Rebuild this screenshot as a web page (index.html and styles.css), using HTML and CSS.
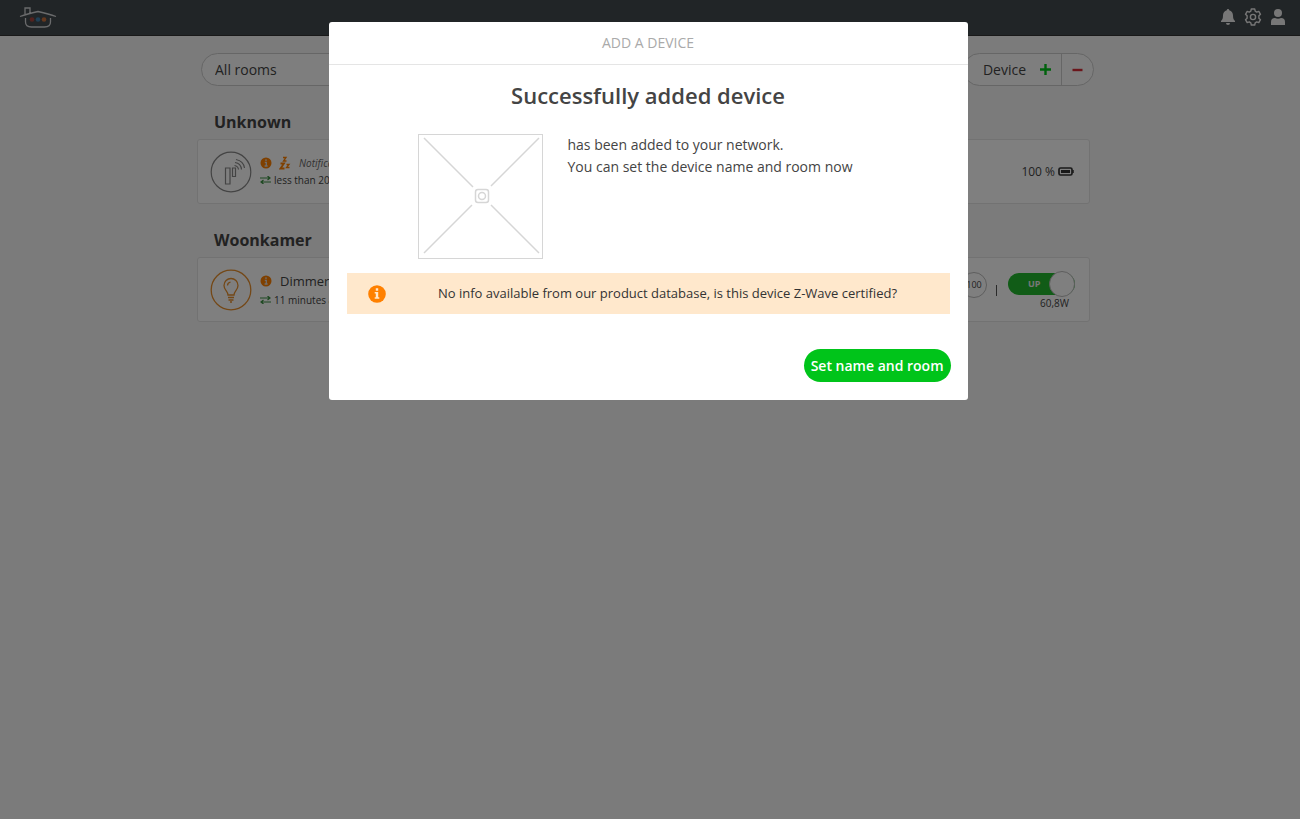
FILE: index.html
```html
<!DOCTYPE html>
<html lang="en">
<head>
<meta charset="utf-8">
<meta name="viewport" content="width=device-width, initial-scale=1">
<title>Add a device</title>
<link rel="stylesheet" href="styles.css">
</head>
<body>
<header class="topbar">
  <a class="logo" href="#" aria-label="Home">
    <svg width="38" height="22" viewBox="0 0 38 22" fill="none" stroke="#d4d6d8" stroke-width="1.300">
      <path d="M1 10.500Q8 8 19 5.500 30 8 37 10.500M6 8.500V2h5v5M6.500 12v4q0 5 6 5h13q6 0 6-5v-4"/>
      <circle cx="13" cy="13.500" r="2.300" fill="#a8453c" stroke="none"/>
      <circle cx="19" cy="13.500" r="2.300" fill="#3e80ac" stroke="none"/>
      <circle cx="25" cy="13.500" r="2.300" fill="#c9703c" stroke="none"/>
    </svg>
  </a>
  <nav class="tools">
    <button class="tool" aria-label="Notifications">
      <svg width="16" height="18" viewBox="0 0 16 18" fill="currentColor"><path d="M8 1a1.200 1.200 0 0 0-1.200 1.300C4.300 2.900 3 5 3 7.500c0 3-.7 4.300-2 5.500v1h14v-1c-1.300-1.200-2-2.500-2-5.500 0-2.500-1.300-4.600-3.800-5.200A1.200 1.200 0 0 0 8 1ZM6 15a2 2 0 0 0 4 0Z"/></svg>
    </button>
    <button class="tool" aria-label="Settings">
      <svg width="18" height="18" viewBox="0 0 18 18" fill="none" stroke="currentColor" stroke-width="1.400" stroke-linejoin="round"><path d="M7.300 1h3.400l.5 2.200 1.500.9 2.100-.7 1.700 2.900-1.600 1.500v2.400l1.600 1.500-1.700 2.900-2.100-.7-1.500.9-.5 2.200H7.300l-.5-2.200-1.500-.9-2.100.7-1.700-2.900 1.600-1.500V7.800L1.500 6.300l1.700-2.900 2.100.7 1.500-.9Z"/><circle cx="9" cy="9" r="2.600"/></svg>
    </button>
    <button class="tool" aria-label="Account">
      <svg width="16" height="18" viewBox="0 0 16 18" fill="currentColor"><circle cx="8" cy="5" r="4"/><path d="M1 17v-3q0-4 4-4 3 1.300 6 0 4 0 4 4v3Z"/></svg>
    </button>
  </nav>
</header>

<main class="page">
  <div class="filters">
    <select class="room-select" aria-label="Room"><option>All rooms</option></select>
    <div class="device-actions">
      <button class="action add">Device
        <svg width="11" height="11" viewBox="0 0 11 11" stroke="#00c41a" stroke-width="2.400"><path d="M5.500 0v11M0 5.500h11"/></svg>
      </button>
      <button class="action remove" aria-label="Remove device">
        <svg width="11" height="11" viewBox="0 0 11 11" stroke="#d62c36" stroke-width="2.400"><path d="M.5 6h10"/></svg>
      </button>
    </div>
  </div>

  <h2 class="room">Unknown</h2>
  <section class="card">
    <svg class="device-icon" width="42" height="42" viewBox="0 0 42 42" fill="none" stroke="#888" stroke-width="1.200">
      <circle cx="21" cy="21" r="19.800"/><path d="M15.500 17h4.500v16h-4.500ZM22.500 17h3v8.500h-3ZM24.500 14.500q3.500.5 4 4M25 11.500q6 .8 6.500 7M26 8.500q7.500 1.500 8.500 8.500"/>
    </svg>
    <div class="details">
      <div class="line">
        <svg width="12" height="12" viewBox="0 0 12 12"><circle cx="6" cy="6" r="5.500" fill="#ff8000"/><path d="M6 2.300v1.700M4.800 5.300H6.300v3.500M4.600 9h3" stroke="#ddd" stroke-width="1.300" fill="none"/></svg>
        <svg class="sleep" width="12" height="14" viewBox="0 0 12 14" fill="none" stroke="#ff8000" stroke-width="1.300"><path d="M1.500 7.500h3.500L1.500 12.500h4" stroke-width="1.800"/><path d="M4 1.500h3l-2.500 3.500h3M7.500 8.500h2.500l-2.500 3h3"/></svg>
        <em class="kind">Notification sensor</em>
      </div>
      <div class="line seen">
        <svg width="11" height="8" viewBox="0 0 11 8" fill="none" stroke="#3c9144" stroke-width="1.200"><path d="M0 2h10M7.500 0 10 2 7.500 4M11 6H1M3.500 4 1 6l2.500 2"/></svg>
        <span>less than 20 seconds ago</span>
      </div>
    </div>
    <div class="battery">100 %
      <svg width="16" height="10" viewBox="0 0 16 10" fill="none" stroke="#333"><rect x="1" y="1" width="13" height="7" rx="1.500" stroke-width="1.700"/><path d="M3 4.500h9" stroke-width="3"/><path d="M15 3v3" stroke-width="1.500"/></svg>
    </div>
  </section>

  <h2 class="room">Woonkamer</h2>
  <section class="card">
    <svg class="device-icon" width="42" height="42" viewBox="0 0 42 42" fill="none" stroke="#e8902e" stroke-width="1.300">
      <circle cx="21" cy="21" r="19.800"/><path d="M18 26c0-4-4-5-4-9.500a7 7 0 0 1 14 0c0 4.500-4 5.500-4 9.500ZM18 28.500h6M18.500 31h5M20 33h2M17.500 16.500q.3-3 3-3.300"/>
    </svg>
    <div class="details">
      <div class="line titled">
        <svg width="12" height="12" viewBox="0 0 12 12"><circle cx="6" cy="6" r="5.500" fill="#ff8000"/><path d="M6 2.300v1.700M4.800 5.300H6.300v3.500M4.600 9h3" stroke="#ddd" stroke-width="1.300" fill="none"/></svg>
        <span class="name">Dimmer</span>
      </div>
      <div class="line seen">
        <svg width="11" height="8" viewBox="0 0 11 8" fill="none" stroke="#3c9144" stroke-width="1.200"><path d="M0 2h10M7.500 0 10 2 7.500 4M11 6H1M3.500 4 1 6l2.500 2"/></svg>
        <span>11 minutes ago</span>
      </div>
    </div>
    <div class="controls">
      <span class="level">100</span>
      <span class="divider"></span>
      <div class="power">
        <label class="switch"><input type="checkbox" checked><span>UP</span></label>
        <span class="watts">60,8W</span>
      </div>
    </div>
  </section>
</main>

<div class="backdrop">
  <div class="dialog" role="dialog" aria-modal="true" aria-labelledby="dialog-title">
    <div class="dialog-head" id="dialog-title">ADD A DEVICE</div>
    <div class="dialog-body">
      <h1 class="result">Successfully added device</h1>
      <div class="summary">
        <svg class="photo" width="125" height="125" viewBox="0 0 125 125" fill="none" stroke="#d6d6d6" role="img" aria-label="No product picture">
          <rect x=".5" y=".5" width="124" height="124"/>
          <path d="M6 4 55 53M121 4 73 52M6 119 54 71M121 119 73 71" stroke-width="1.500"/>
          <rect x="57.500" y="55.500" width="13" height="13" rx="2.500" stroke-width="1.500"/><circle cx="64" cy="62" r="3.500" stroke-width="1.500"/>
        </svg>
        <p class="message">has been added to your network.<br>You can set the device name and room now</p>
      </div>
      <div class="notice">
        <svg width="18" height="18" viewBox="0 0 18 18"><circle cx="9" cy="9" r="8.800" fill="#ff8000"/><path d="M7.800 3.300h2.400v2.400H7.800ZM6.700 7h3.500v5.200h1.100v1.600H6.700v-1.600h1.100V8.600H6.700Z" fill="#ffe8cc"/></svg>
        <p>No info available from our product database, is this device Z-Wave certified?</p>
      </div>
      <div class="buttons"><button class="primary">Set name and room</button></div>
    </div>
  </div>
</div>
</body>
</html>
```
FILE: styles.css
```css
* { box-sizing: border-box; }
body {
  margin: 0;
  min-height: 100vh;
  background: #f6f6f6;
  color: #444;
  font-family: "Open Sans", "Noto Sans", sans-serif;
  font-size: 14px;
}
h1, h2, p { margin: 0; }
button, select { font: inherit; color: inherit; cursor: pointer; }
svg { flex: none; display: block; }

.topbar {
  display: flex;
  align-items: center;
  justify-content: space-between;
  height: 36px;
  padding: 0 14px 2px 19px;
  background: #434a4e;
  border-bottom: 1px solid #333;
}
.tools { display: flex; gap: 8px; }
.tool { display: flex; padding: 0; border: 0; background: none; color: #eee; }

.page { max-width: 906px; margin: 0 auto; padding: 17px 13px 0 0; }
.filters { display: flex; justify-content: space-between; margin: 0 -4px 0 4px; }
.room-select {
  appearance: none;
  width: 300px;
  height: 33px;
  padding: 0 13px;
  border: 1px solid #ccc;
  border-radius: 17px;
  background: #fcfcfc;
}
.device-actions {
  display: flex;
  height: 33px;
  border: 1px solid #ccc;
  border-radius: 17px;
  background: #fcfcfc;
}
.action { display: flex; align-items: center; border: 0; background: none; }
.add { gap: 14px; padding: 0 10px 0 19px; font-size: 14px; }
.remove { padding: 0 10px; border-left: 1px solid #ccc; }

.room { margin: 24px 0 5px 17px; font-size: 16px; line-height: 24px; }
.card {
  display: flex;
  align-items: center;
  height: 65px;
  padding: 0 14px 0 12px;
  border: 1px solid #e4e4e4;
  border-radius: 3px;
  background: #fff;
}
.details { flex: 1; margin-left: 8px; }
.line { display: flex; align-items: center; height: 17px; }
.titled { height: 20px; }
.kind { margin-left: 8px; font-size: 10px; color: #666; }
.sleep { margin-left: 7px; }
.name { margin-left: 8px; font-size: 13px; }
.seen { gap: 3px; font-size: 10px; }
.battery { display: flex; align-items: center; gap: 3px; padding-right: 1px; font-size: 12px; }
.controls { display: flex; align-items: flex-start; padding-top: 2px; }
.level {
  display: flex;
  align-items: center;
  justify-content: center;
  width: 26px;
  height: 26px;
  border: 1px solid #bbb;
  border-radius: 50%;
  font-size: 9px;
}
.divider { width: 1px; height: 11px; margin: 13px 11px 0 9px; background: #555; }
.power { display: flex; flex-direction: column; }
.switch {
  display: flex;
  position: relative;
  align-items: center;
  width: 67px;
  height: 24px;
}
.switch input { position: absolute; inset: 0; margin: 0; opacity: 0; }
.switch span {
  flex: 1;
  height: 22px;
  padding-left: 20px;
  border-radius: 11px;
  background: #22b82e;
  color: #eee;
  font-size: 9px;
  font-weight: 700;
  line-height: 22px;
}
.switch::after {
  content: "";
  position: absolute;
  right: 0;
  width: 24px;
  height: 24px;
  border: 1px solid #bbb;
  border-radius: 50%;
  background: #fff;
}
.watts { padding-right: 6px; font-size: 10px; line-height: 14px; text-align: right; }

.backdrop { position: fixed; inset: 0; padding: 22px 20px 22px 16px; background: rgba(0, 0, 0, .5); }
.dialog {
  max-width: 639px;
  margin: 0 auto;
  border-radius: 3px;
  background: #fff;
}
.dialog-head {
  padding: 10px 0;
  border-bottom: 1px solid #e5e5e5;
  color: #aaa;
  font-size: 14px;
  line-height: 22px;
  text-align: center;
}
.dialog-body { padding: 14px 18px 18px; }
.result { font-size: 22px; font-weight: 600; line-height: 32px; text-align: center; }
.summary { display: flex; gap: 25px; margin: 23px 71px 14px; }
.message { font-size: 14px; line-height: 22px; }
.notice {
  display: flex;
  align-items: center;
  padding: 10px 0 10px 21px;
  background: #ffe8cc;
  color: #333;
  font-size: 13px;
  line-height: 21px;
}
.notice p { flex: 1; text-align: center; }
.buttons { display: flex; justify-content: flex-end; margin: 35px -1px 0 0; }
.primary {
  height: 33px;
  padding: 0 7px;
  border: 0;
  border-radius: 17px;
  background: #00c41a;
  color: #fff;
  font-size: 14px;
  font-weight: 600;
}
```
